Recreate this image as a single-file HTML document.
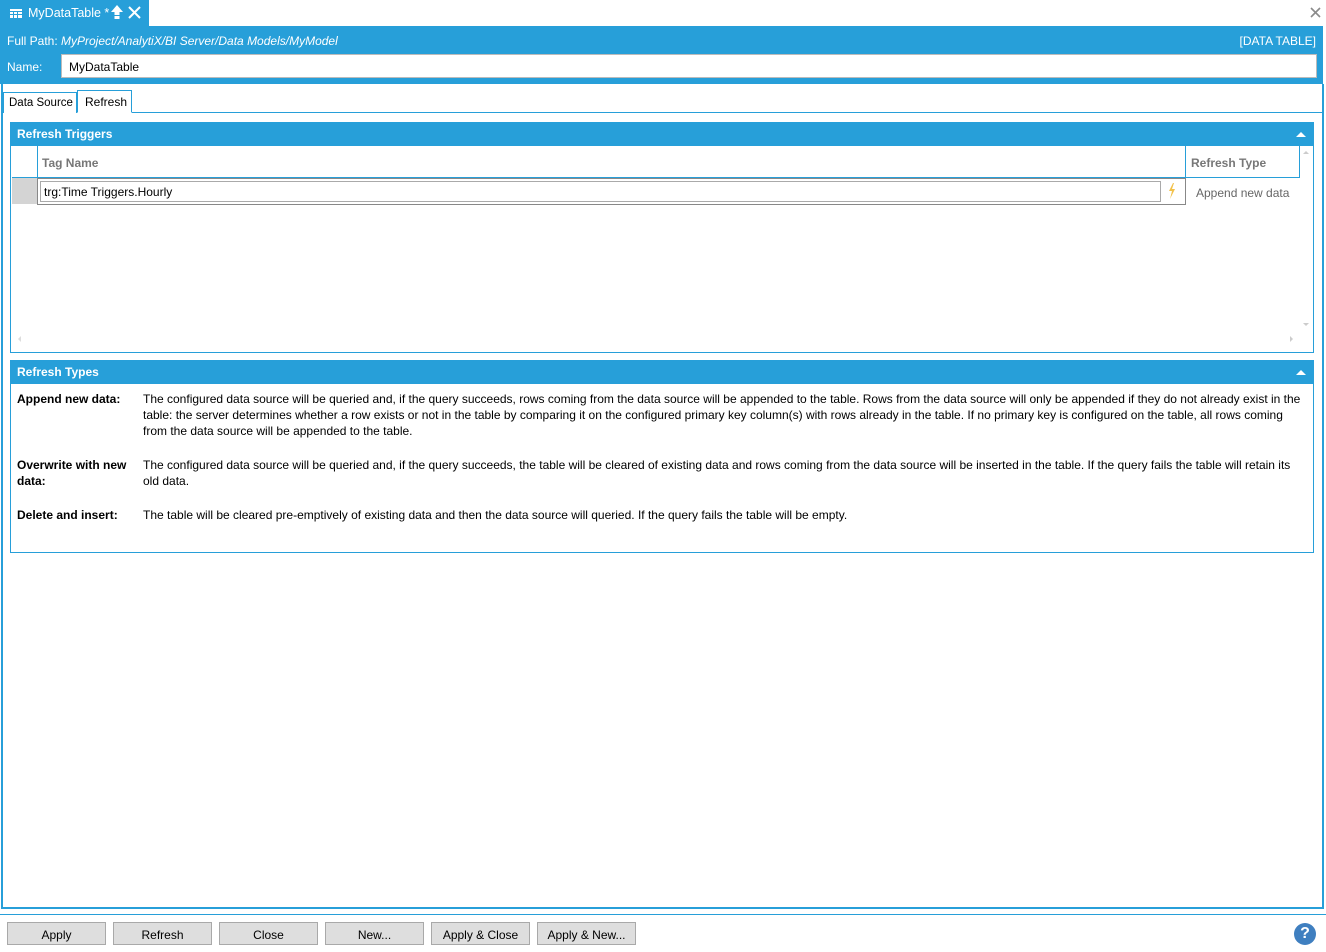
<!DOCTYPE html>
<html><head><style>
*{box-sizing:border-box;margin:0;padding:0}
body{width:1326px;height:952px;background:#fff;font-family:"Liberation Sans",sans-serif;font-size:12px;color:#000;position:relative;overflow:hidden}
.a{position:absolute}
.blue{background:#279fd9}
.btn{position:absolute;top:922px;width:99px;height:23px;background:#dedede;border:1px solid #a9a9a9;text-align:center;line-height:24px;font-size:12px;color:#000}
.hdr{position:absolute;left:10px;width:1304px;height:24px;background:#279fd9;color:#fff;font-weight:bold;font-size:12px;line-height:25px;padding-left:7px}
.tri{position:absolute;right:8px;top:10px;width:0;height:0;border-left:5px solid transparent;border-right:5px solid transparent;border-bottom:5px solid #fff}
.lbl{position:absolute;left:17px;font-weight:bold;width:120px;line-height:16px}
.txt{position:absolute;left:143px;width:1162px;line-height:16px}
</style></head><body>
<div class="a blue" style="left:0;top:0;width:149px;height:26px"></div>
<div class="a" style="left:10px;top:7px;width:12px;height:11px;color:#fff">
<svg width="12" height="11"><rect x="0" y="2" width="12" height="9" fill="#fff"/><g fill="#279fd9"><rect x="3" y="5" width="1" height="6"/><rect x="7" y="5" width="1" height="6"/><rect x="0" y="4" width="12" height="1"/><rect x="0" y="7" width="12" height="1"/></g></svg></div>
<div class="a" style="left:28px;top:6px;color:#fff;font-size:12.5px">MyDataTable *</div>
<div class="a" style="left:110px;top:4px"><svg width="14" height="17"><path d="M7 1 L1 8 H4.5 V11 H9.5 V8 H13 Z" fill="#fff"/><rect x="4.5" y="12" width="5" height="3" fill="#fff"/></svg></div>
<div class="a" style="left:128px;top:6px"><svg width="13" height="13"><path d="M1 1 L12 12 M12 1 L1 12" stroke="#fff" stroke-width="2"/></svg></div>
<div class="a" style="left:1310px;top:7px"><svg width="11" height="11"><path d="M1 1 L10 10 M10 1 L1 10" stroke="#8a8a8a" stroke-width="1.6"/></svg></div>
<div class="a blue" style="left:0;top:26px;width:1323px;height:58px"></div>
<div class="a" style="left:7px;top:34px;color:#fff">Full Path:</div>
<div class="a" style="left:61px;top:34px;color:#fff;font-style:italic">MyProject/AnalytiX/BI Server/Data Models/MyModel</div>
<div class="a" style="right:10px;top:34px;color:#fff">[DATA TABLE]</div>
<div class="a" style="left:7px;top:60px;color:#fff">Name:</div>
<div class="a" style="left:61px;top:54px;width:1256px;height:24px;background:#fff;border:1px solid #bbb;padding-left:7px;line-height:24px">MyDataTable</div>
<div class="a" style="left:1px;top:84px;width:1323px;height:825px;border-left:2px solid #279fd9;border-right:2px solid #279fd9;border-bottom:2px solid #279fd9"></div>
<div class="a" style="left:2px;top:112px;width:1321px;height:1px;background:#279fd9"></div>
<div class="a" style="left:3px;top:92px;width:74px;height:21px;border:1px solid #279fd9;border-bottom:none;line-height:20px;padding-left:5px;background:#fff;font-size:11.5px;white-space:nowrap">Data Source</div>
<div class="a" style="left:77px;top:90px;width:55px;height:23px;border:1px solid #279fd9;border-bottom:1px solid #fff;line-height:22px;padding-left:7px;background:#fff">Refresh</div>
<div class="hdr" style="top:122px">Refresh Triggers<div class="tri"></div></div>
<div class="a" style="left:10px;top:146px;width:1304px;height:207px;border:1px solid #279fd9;border-top:none"></div>
<div class="a" style="left:37px;top:146px;width:1px;height:31px;background:#279fd9"></div>
<div class="a" style="left:1185px;top:146px;width:1px;height:31px;background:#279fd9"></div>
<div class="a" style="left:1299px;top:146px;width:1px;height:31px;background:#279fd9"></div>
<div class="a" style="left:12px;top:177px;width:1288px;height:1px;background:#279fd9"></div>
<div class="a" style="left:42px;top:156px;color:#777;font-weight:bold">Tag Name</div>
<div class="a" style="left:1191px;top:156px;color:#777;font-weight:bold">Refresh Type</div>
<div class="a" style="left:12px;top:178px;width:25px;height:26px;background:#d4d4d4"></div>
<div class="a" style="left:37px;top:178px;width:1149px;height:27px;border:1px solid #888"></div>
<div class="a" style="left:40px;top:181px;width:1121px;height:21px;border:1px solid #aaa;padding-left:3px;line-height:21px">trg:Time Triggers.Hourly</div>
<div class="a" style="left:1167px;top:182px"><svg width="10" height="18"><path d="M6 1 L2 9 H5 L3 17 L8 7 H5 L7 1 Z" fill="#f2c14a"/></svg></div>
<div class="a" style="left:1196px;top:186px;color:#666">Append new data</div>
<div class="a" style="left:1303px;top:151px;border-left:3px solid transparent;border-right:3px solid transparent;border-bottom:3px solid #ccc"></div>
<div class="a" style="left:1303px;top:323px;border-left:3px solid transparent;border-right:3px solid transparent;border-top:3px solid #ccc"></div>
<div class="a" style="left:1290px;top:336px;border-top:3px solid transparent;border-bottom:3px solid transparent;border-left:3px solid #ccc"></div>
<div class="a" style="left:18px;top:336px;border-top:3px solid transparent;border-bottom:3px solid transparent;border-right:3px solid #ddd"></div>
<div class="hdr" style="top:360px">Refresh Types<div class="tri"></div></div>
<div class="a" style="left:10px;top:384px;width:1304px;height:169px;border:1px solid #279fd9;border-top:none"></div>
<div class="lbl" style="top:391px">Append new data:</div>
<div class="txt" style="top:391px">The configured data source will be queried and, if the query succeeds, rows coming from the data source will be appended to the table. Rows from the data source will only be appended if they do not already exist in the table: the server determines whether a row exists or not in the table by comparing it on the configured primary key column(s) with rows already in the table. If no primary key is configured on the table, all rows coming from the data source will be appended to the table.</div>
<div class="lbl" style="top:457px">Overwrite with new data:</div>
<div class="txt" style="top:457px">The configured data source will be queried and, if the query succeeds, the table will be cleared of existing data and rows coming from the data source will be inserted in the table. If the query fails the table will retain its old data.</div>
<div class="lbl" style="top:507px">Delete and insert:</div>
<div class="txt" style="top:507px">The table will be cleared pre-emptively of existing data and then the data source will queried. If the query fails the table will be empty.</div>
<div class="a" style="left:0;top:914px;width:1326px;height:1px;background:#279fd9"></div>
<div class="btn" style="left:7px">Apply</div>
<div class="btn" style="left:113px">Refresh</div>
<div class="btn" style="left:219px">Close</div>
<div class="btn" style="left:325px">New...</div>
<div class="btn" style="left:431px">Apply &amp; Close</div>
<div class="btn" style="left:537px">Apply &amp; New...</div>
<div class="a" style="left:1294px;top:923px;width:22px;height:22px;border-radius:50%;background:#3f7fc0;color:#fff;font-weight:bold;font-size:16px;text-align:center;line-height:22px">?</div>
</body></html>
